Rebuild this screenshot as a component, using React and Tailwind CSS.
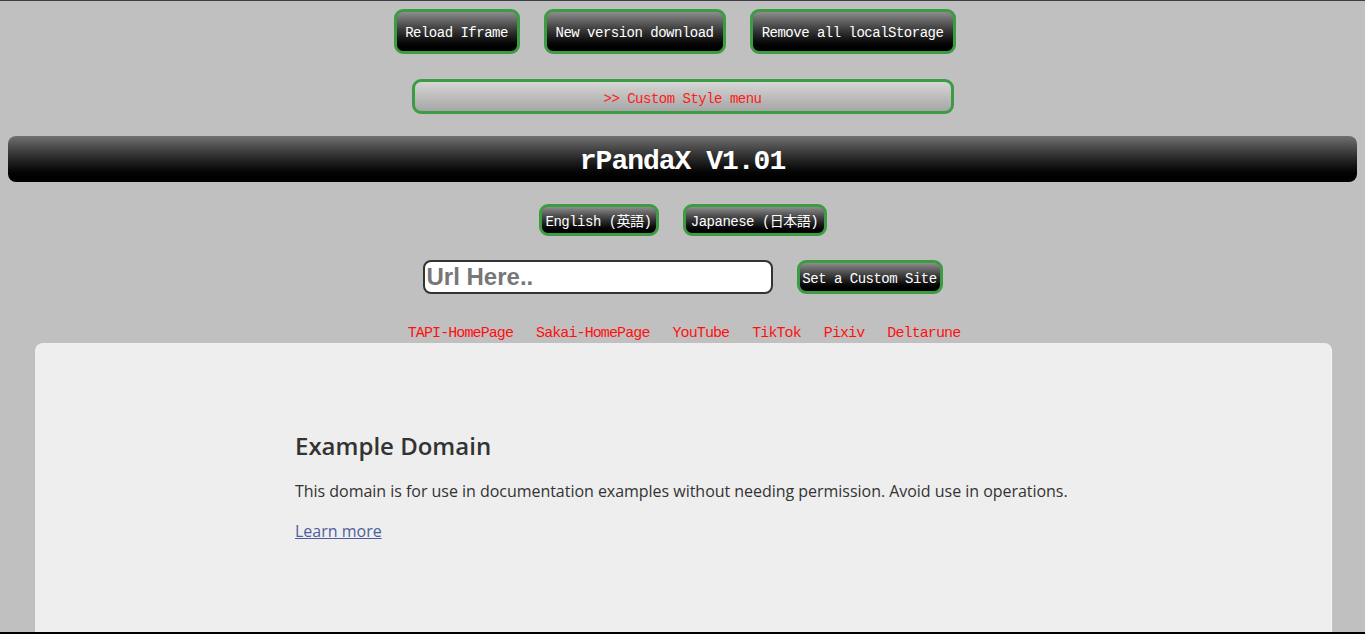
import { useState } from "react";

const pixelFont = {
  fontFamily: '"Liberation Mono", "Noto Sans CJK JP", monospace',
};

function DarkButton({ children, className = "" }) {
  return (
    <button
      className={
        "rounded-[9px] border-[3px] border-[#3d9c43] bg-gradient-to-b from-[#8e8e8e] to-black text-white text-[14px] tracking-[-0.5px] leading-none pt-[3px] " +
        className
      }
      style={pixelFont}
    >
      {children}
    </button>
  );
}

export default function App() {
  const [url, setUrl] = useState("");
  const links = ["TAPI-HomePage", "Sakai-HomePage", "YouTube", "TikTok", "Pixiv", "Deltarune"];

  return (
    <div className="h-[634px] overflow-hidden bg-[#c0c0c0] border-t border-[#3c3c44] border-b-2 border-b-black flex flex-col">
      <div className="flex justify-center gap-[24px] mt-[8px] pr-[16px]">
        <DarkButton className="w-[126px] h-[45px]">Reload Iframe</DarkButton>
        <DarkButton className="w-[182px] h-[45px]">New version download</DarkButton>
        <DarkButton className="w-[206px] h-[45px]">Remove all localStorage</DarkButton>
      </div>

      <div className="flex justify-center mt-[25px]">
        <button
          className="w-[542px] h-[35px] rounded-[9px] border-[3px] border-[#3d9c43] bg-gradient-to-b from-[#d6d6d6] to-[#a6a6a6] text-[#ff1a1a] text-[14px] tracking-[-0.5px] pt-[5px]"
          style={pixelFont}
        >
          &gt;&gt; Custom Style menu
        </button>
      </div>

      <div className="mx-[8px] mt-[22px] h-[46px] rounded-[8px] bg-gradient-to-b from-[#717171] to-black flex items-center justify-center pt-[6px]">
        <h1 className="text-white text-[28px] font-bold tracking-[-1px] leading-none" style={pixelFont}>
          rPandaX V1.01
        </h1>
      </div>

      <div className="flex justify-center gap-[24px] mt-[22px]">
        <DarkButton className="w-[120px] h-[32px]">English (英語)</DarkButton>
        <DarkButton className="w-[144px] h-[32px]">Japanese (日本語)</DarkButton>
      </div>

      <div className="flex justify-center items-center gap-[24px] mt-[24px]">
        <input
          value={url}
          onChange={(e) => setUrl(e.target.value)}
          placeholder="Url Here.."
          className="w-[350px] h-[34px] bg-white border-2 border-[#333] rounded-[8px] px-[2px] text-[24px] font-bold placeholder:text-[#777] outline-none"
          style={{ fontFamily: '"Liberation Sans", Arial, sans-serif' }}
        />
        <DarkButton className="w-[146px] h-[34px]">Set a Custom Site</DarkButton>
      </div>

      <div className="flex justify-center gap-[23px] mt-[32px] pl-[3px] text-[#ff1010] text-[15px] tracking-[-0.9px] leading-[16px]" style={pixelFont}>
        {links.map((l) => (
          <a key={l} href="#">
            {l}
          </a>
        ))}
      </div>

      <div className="ml-[35px] mr-[33px] mt-[1px] flex-1 rounded-t-[8px] bg-[#eeeeee] border-r border-[#f8f8f8]">
        <div
          className="pl-[260px] pt-[86px] text-[#333]"
          style={{ fontFamily: '"Open Sans", "Noto Sans", sans-serif' }}
        >
          <h2 className="text-[24px] font-semibold leading-[34px]">Example Domain</h2>
          <p className="mt-[16px] text-[16px] leading-[24px] tracking-[-0.03px]">
            This domain is for use in documentation examples without needing permission. Avoid use in operations.
          </p>
          <a href="#" className="inline-block mt-[16px] text-[16px] text-[#4e5e9c] underline">
            Learn more
          </a>
        </div>
      </div>
    </div>
  );
}
